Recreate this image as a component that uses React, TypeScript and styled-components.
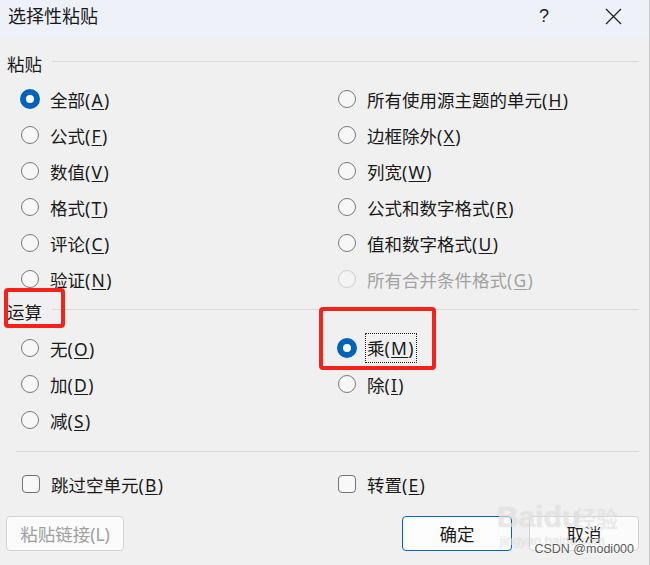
import React from "react";
import styled, { createGlobalStyle, css } from "styled-components";

const GlobalStyle = createGlobalStyle`
  html, body {
    margin: 0;
    padding: 0;
    background: #f0f0f0;
  }
  body {
    font-family: "Noto Sans", "Noto Sans CJK SC", sans-serif;
    color: #1b1b1b;
  }
`;

const Dialog = styled.div`
  position: relative;
  width: 650px;
  height: 565px;
  background: #f0f0f0;
  overflow: hidden;
  border-right: 1px solid #c8c8c8;
  box-sizing: border-box;
`;

const TitleBar = styled.div`
  height: 37px;
  background: #eef2f8;
  display: flex;
  align-items: flex-start;
  padding: 2px 0 0 8px;
  box-sizing: border-box;
`;

const Title = styled.div`
  flex: 1;
  font-size: 18px;
  line-height: 28px;
  color: #1a1a1a;
`;

const TitleButton = styled.div<{ $width: number }>`
  width: ${(p) => p.$width}px;
  height: 28px;
  display: flex;
  align-items: center;
  justify-content: center;
  font-family: "Liberation Sans", sans-serif;
  font-size: 18px;
  color: #222;
`;

const Body = styled.div`
  padding: 13px 10px 0 7px;
`;

const SectionHeader = styled.div<{ $top: number }>`
  display: flex;
  align-items: center;
  gap: 10px;
  height: 26px;
  margin-top: ${(p) => p.$top}px;
  font-size: 17.5px;
  color: #1a1a1a;
  &::after {
    content: "";
    flex: 1;
    height: 1px;
    background: #d9d9d9;
    margin-top: -3px;
  }
`;

const OptionGrid = styled.div<{ $top: number }>`
  display: grid;
  grid-template-columns: 317px 1fr;
  grid-auto-rows: 36px;
  margin-top: ${(p) => p.$top}px;
  padding-left: 14px;
`;

const Option = styled.label<{ $disabled?: boolean }>`
  display: flex;
  align-items: center;
  gap: 11px;
  font-size: 17.5px;
  color: ${(p) => (p.$disabled ? "#a2a2a2" : "#1a1a1a")};
  u {
    text-underline-offset: 2px;
  }
`;

const Key = styled.span`
  letter-spacing: 1.3px;
`;

const Radio = styled.span<{ $checked?: boolean; $disabled?: boolean }>`
  width: 18px;
  height: 18px;
  border-radius: 50%;
  box-sizing: border-box;
  flex: none;
  border: 1px solid ${(p) => (p.$disabled ? "#cfcfcf" : "#7a7a7a")};
  background: ${(p) => (p.$disabled ? "#f4f4f4" : "#f7f7f7")};
  ${(p) =>
    p.$checked &&
    css`
      width: 20px;
      height: 20px;
      margin-left: -1px;
      margin-right: -1px;
      border: 6px solid #0063b8;
      background: #ffffff;
    `}
`;

const Checkbox = styled.span`
  width: 18px;
  height: 18px;
  box-sizing: border-box;
  flex: none;
  border: 1px solid #737373;
  border-radius: 4px;
  background: #f8f8f8;
`;

const FocusText = styled.span`
  display: inline-block;
  border: 1px dotted #222;
  padding: 3px 1px 3px 1px;
  margin-left: -2px;
  line-height: 22px;
`;

const Divider = styled.div`
  height: 1px;
  background: #d9d9d9;
  margin: 13px 0 0 9px;
`;

const CheckGrid = styled(OptionGrid)`
  padding-left: 15px;
  grid-template-columns: 316px 1fr;
`;

const ButtonRow = styled.div`
  display: flex;
  align-items: center;
  margin-top: 14px;
  padding-left: 6px;
`;

const Button = styled.button<{ $primary?: boolean; $width: number }>`
  width: ${(p) => p.$width}px;
  height: 35px;
  border-radius: 4px;
  font-family: inherit;
  font-size: 17.5px;
  padding: 0;
  background: ${(p) => (p.$primary ? "#fdfdfd" : "#fbfbfb")};
  border: 1px solid ${(p) => (p.$primary ? "#0067c0" : "#d3d3d3")};
  color: ${(p) => (p.disabled ? "#a0a0a0" : "#1a1a1a")};
`;

const Spacer = styled.div<{ $width: number }>`
  width: ${(p) => p.$width}px;
  flex: none;
`;

const Annotation = styled.div<{ $x: number; $y: number; $w: number; $h: number }>`
  position: absolute;
  left: ${(p) => p.$x}px;
  top: ${(p) => p.$y}px;
  width: ${(p) => p.$w}px;
  height: ${(p) => p.$h}px;
  border: 4px solid #f5211b;
  border-radius: 4px;
  box-sizing: border-box;
  pointer-events: none;
`;

const Watermark = styled.div`
  position: absolute;
  left: 497px;
  top: 500px;
  display: flex;
  flex-direction: column;
  align-items: flex-start;
  pointer-events: none;
  color: rgba(255, 255, 255, 0.5);
  text-shadow: 0 0 1px rgba(150, 150, 150, 0.45);
`;

const WatermarkLogo = styled.div`
  font-family: "Liberation Sans", sans-serif;
  font-size: 30px;
  font-weight: bold;
  line-height: 34px;
  span {
    font-family: "Noto Sans CJK SC", sans-serif;
    font-size: 22px;
    font-weight: normal;
    margin-left: -6px;
  }
`;

const WatermarkUrl = styled.div`
  font-family: "Liberation Sans", sans-serif;
  font-size: 13px;
  line-height: 14px;
  margin-left: 3px;
`;

const Credit = styled.div`
  position: absolute;
  right: 15px;
  bottom: 9px;
  font-family: "Liberation Sans", sans-serif;
  font-size: 12.5px;
  color: #5a5a5a;
  text-shadow: 0 0 2px #fff, 0 0 2px #fff;
  pointer-events: none;
`;

type Item = { label: string; key: string; checked?: boolean; disabled?: boolean; focus?: boolean };

const paste: Item[] = [
  { label: "全部", key: "A", checked: true },
  { label: "所有使用源主题的单元", key: "H" },
  { label: "公式", key: "F" },
  { label: "边框除外", key: "X" },
  { label: "数值", key: "V" },
  { label: "列宽", key: "W" },
  { label: "格式", key: "T" },
  { label: "公式和数字格式", key: "R" },
  { label: "评论", key: "C" },
  { label: "值和数字格式", key: "U" },
  { label: "验证", key: "N" },
  { label: "所有合并条件格式", key: "G", disabled: true },
];

const ops: Item[] = [
  { label: "无", key: "O" },
  { label: "乘", key: "M", checked: true, focus: true },
  { label: "加", key: "D" },
  { label: "除", key: "I" },
  { label: "减", key: "S" },
];

function Label({ item }: { item: Item }) {
  const text = (
    <>
      {item.label}
      <Key>
        (<u>{item.key}</u>)
      </Key>
    </>
  );
  return item.focus ? <FocusText>{text}</FocusText> : <span>{text}</span>;
}

function RadioOption({ item }: { item: Item }) {
  return (
    <Option $disabled={item.disabled}>
      <Radio $checked={item.checked} $disabled={item.disabled} />
      <Label item={item} />
    </Option>
  );
}

export default function App() {
  return (
    <>
      <GlobalStyle />
      <Dialog>
        <TitleBar>
          <Title>选择性粘贴</Title>
          <TitleButton $width={40}>?</TitleButton>
          <Spacer $width={29} />
          <TitleButton $width={40}>
            <svg width="17" height="17" viewBox="0 0 17 17">
              <path d="M1 1 L16 16 M16 1 L1 16" stroke="#222" strokeWidth="1.3" />
            </svg>
          </TitleButton>
          <Spacer $width={16} />
        </TitleBar>
        <Body>
          <SectionHeader $top={0}>粘贴</SectionHeader>
          <OptionGrid $top={5}>
            {paste.map((item) => (
              <RadioOption key={item.key} item={item} />
            ))}
          </OptionGrid>
          <SectionHeader $top={1}>运算</SectionHeader>
          <OptionGrid $top={6}>
            {ops.map((item) => (
              <RadioOption key={item.key} item={item} />
            ))}
          </OptionGrid>
          <Divider />
          <CheckGrid $top={14}>
            <Option>
              <Checkbox />
              <span>
                跳过空单元
                <Key>
                  (<u>B</u>)
                </Key>
              </span>
            </Option>
            <Option>
              <Checkbox />
              <span>
                转置
                <Key>
                  (<u>E</u>)
                </Key>
              </span>
            </Option>
          </CheckGrid>
        </Body>
        <ButtonRow>
          <Button $width={118} disabled>
            粘贴链接(L)
          </Button>
          <Spacer $width={278} />
          <Button $width={110} $primary>
            确定
          </Button>
          <Spacer $width={17} />
          <Button $width={110}>取消</Button>
        </ButtonRow>
        <Annotation $x={4} $y={288} $w={61} $h={40} />
        <Annotation $x={319} $y={307} $w={117} $h={63} />
        <Watermark>
          <WatermarkLogo>
            Baidu<span>经验</span>
          </WatermarkLogo>
          <WatermarkUrl>jingyan.baidu.com</WatermarkUrl>
        </Watermark>
        <Credit>CSDN @modi000</Credit>
      </Dialog>
    </>
  );
}
